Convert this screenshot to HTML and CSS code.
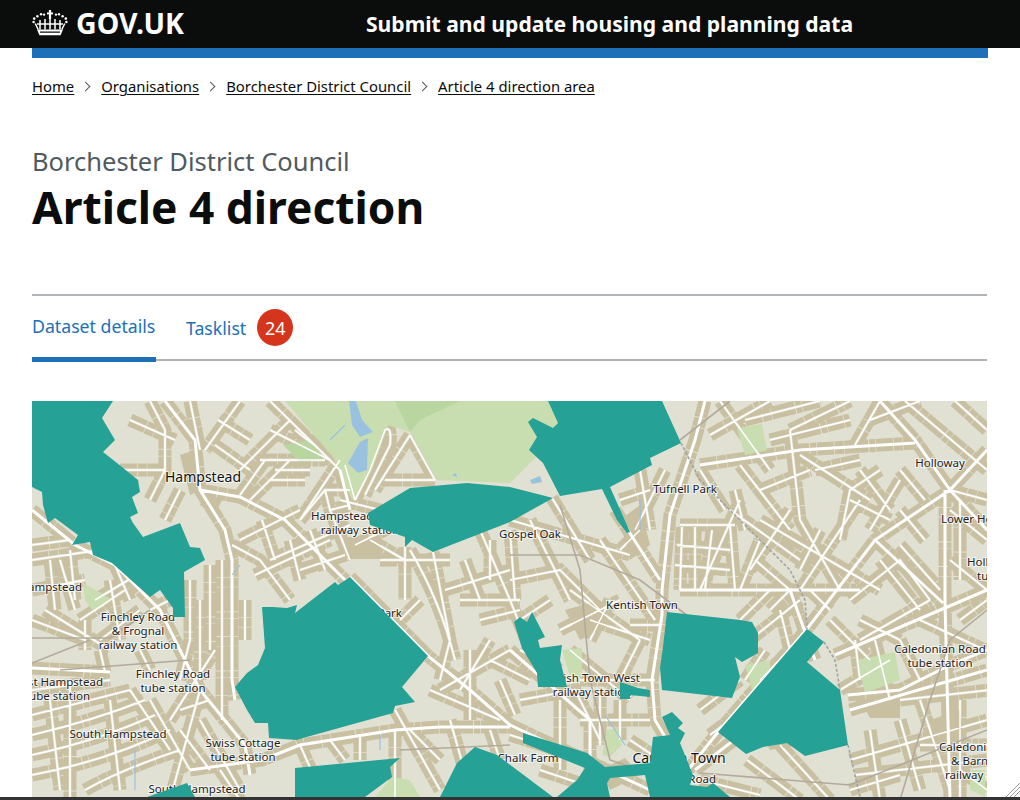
FILE: index.html
```html
<!DOCTYPE html>
<html lang="en">
	<head>
		<meta charset="utf-8">
		<title>Article 4 direction</title>
		<link rel="stylesheet" href="styles.css">
	</head>
	<body>
		<header class="top-bar">
			<a class="logo" href="#">
				<svg class="crown" viewBox="0 0 36 26" width="36" height="26" aria-hidden="true">
					<g fill="#fff">
						<rect x="16.9" y="0" width="2.2" height="9"/>
						<rect x="15" y="2.4" width="6" height="2"/>
						<circle cx="12" cy="4.6" r="1.2"/><circle cx="24" cy="4.6" r="1.2"/>
						<circle cx="9" cy="4.2" r="1.2"/><circle cx="27" cy="4.2" r="1.2"/>
						<circle cx="5.4" cy="6.2" r="1.2"/><circle cx="30.6" cy="6.2" r="1.2"/>
						<circle cx="2.2" cy="8.6" r="1.3"/><circle cx="33.8" cy="8.6" r="1.3"/>
						<circle cx="1.6" cy="12" r="1.2"/><circle cx="34.4" cy="12" r="1.2"/>
						<path d="M5 19.6h26l-2.4 5.6H7.4zM8 21.6v1.2h20v-1.2z" fill-rule="evenodd"/>
					</g>
					<g fill="none" stroke="#fff" stroke-width="1.5">
						<path d="M3.2 13.5l3 6M32.8 13.5l-3 6M8 10v9.6M28 10v9.6M13 9v10.6M23 9v10.6M18 9v10.6"/>
						<path d="M5 14h26"/>
					</g>
				</svg>
				<span class="logo-text">GOV.UK</span>
			</a>
			<a class="service-name" href="#">Submit and update housing and planning data</a>
		</header>

		<div class="wrapper">
			<div class="blue-bar"></div>

			<nav class="breadcrumbs">
				<a href="#">Home</a>
				<span class="sep"></span>
				<a href="#">Organisations</a>
				<span class="sep"></span>
				<a href="#">Borchester District Council</a>
				<span class="sep"></span>
				<a href="#">Article 4 direction area</a>
			</nav>

			<div class="page-head">
				<span class="caption">Borchester District Council</span>
				<h1>Article 4 direction</h1>
			</div>

			<nav class="tabs">
				<a class="tab active" href="#">Dataset details</a>
				<a class="tab" href="#">Tasklist <span class="count">24</span></a>
			</nav>

			<svg class="map" viewBox="32 401 955 396" width="955" height="396" role="img" aria-label="Map of Article 4 direction areas">
				<defs>
					<path id="minor" d="M150 401L165 430V470L150 500M130 420L175 440M190 401L200 450M120 470L165 470M240 401L205 450M240 470L290 420M260 460H325M270 430L330 460M270 401L340 470M340 460L300 520M345 465L355 500M265 460L240 495M275 470H310M270 480H305M250 500L290 460M300 520L325 490H350M325 490L330 510L350 505M355 500L370 470L385 430Q392 425 390 445L365 495M410 435L375 490M410 435L435 480M385 480H435M218 420L250 440M180 490L165 520M215 445L250 470M295 430L320 450
					M190 580V640M210 565V650M222 560V720M245 600V640M200 600V680M232 545L260 560L290 600M240 540L300 510M255 575L330 540M290 540L300 580M270 560L350 525M330 510L350 560M262 520L275 560M310 530L325 570M340 500L400 515M370 540L405 560M355 545L395 525M300 570L345 555
					M32 560L100 550M50 560L55 610M70 550L75 600M32 590L85 580M45 610L110 650M80 620L125 590M60 560L75 610M32 620L85 640M85 620V650M140 610L100 640M110 580L120 640M32 545L70 540M95 600L145 570M115 565L130 600M150 610L180 595
					M32 715Q90 700 130 690M32 735Q95 720 145 700M32 755Q100 740 155 715M32 775Q110 760 170 730M85 790Q120 770 180 750M70 680V800M130 690L170 750M170 720L215 650M150 700L190 770M200 690L170 800M32 690L110 680M110 700L120 790M180 710L210 700M200 720L240 790M210 770L180 730M100 650L105 672M140 650L150 670M180 680L190 640M220 770L240 800M50 700L60 790
					M405 547V600M410 550Q440 600 455 660M433 552L450 640L440 680M380 560H450M480 530L510 600L530 650M420 600L400 620M445 590L510 570M470 650V720M440 690L510 650M430 690L500 720M395 710L440 790M395 730V800M450 720L470 790M460 600H520M480 620L520 610M490 660L530 680M520 650L560 670M490 540V580M510 530L515 600M465 560L480 600M300 745L320 790M330 740L345 760M360 735V760M460 690L490 640M500 680L515 715M410 730L440 760M490 730L500 760
					M510 520L630 555M552 498L590 560M510 580L560 570L600 610M600 540L655 620M570 590L640 640M610 600L590 640M590 620L650 640M570 650L630 700M560 630L620 600M630 625H660M580 680H655M520 700L575 690L600 740M560 700V770M600 690L600 745M620 700V740M510 735L590 760M580 720H650M530 520L570 600M550 600L520 620M620 550L640 530M640 640L620 680M540 770L600 790M630 740L660 760
					M680 525H735M677 545L730 550M675 565L730 570M682 527L680 590M695 527V590M712 530L705 590M730 525L735 590M740 500L700 590M735 490L745 530M620 500L650 490M640 470L650 530M665 470L635 530
					M700 470L725 510M710 435L770 401M720 401L770 470M740 465L790 530M790 430L850 401M790 430L800 520L840 590M800 455L870 500M855 445L880 401M760 520L880 590M730 510L800 560M755 560L790 590M800 590L860 500M880 470L850 490L840 540M905 401L987 470M955 401L987 430M950 490L987 500M987 540L950 510M960 500V580M850 500L890 520M745 420L820 401M770 440L850 420M815 470L860 460M760 490L810 470M860 470L890 510M900 470L925 500M870 420L920 401M900 480L870 530M740 590L760 540M790 510L750 570M820 530L800 570M900 510L925 540
					M780 610L790 650L800 645M740 620L770 590M850 600L900 560L930 600M860 640L930 600M880 560L920 610M900 545L940 590M830 620L870 660M855 640L860 680M840 690L890 660M875 640L890 700M900 640L920 680M920 620L985 650M900 700L990 690M950 560L987 590M960 620L987 600M770 610L790 590M750 640L800 600M780 660L810 680M810 590L830 610M860 620L900 640
					M850 760L987 720M900 720L920 790M960 700V800M855 775L987 760M920 745H987M850 790L900 775M960 770L987 790M747 760L800 800M780 745L830 800M710 735L730 720M700 710L740 680M745 680L765 650M760 680L800 640M870 730L880 800M920 700L950 790M700 780L760 795"/>
					<path id="major" d="M32 510L75 545L115 565L160 610L180 650L200 690L245 745L250 775M165 401L195 440L200 490L225 530L232 560V680L235 700M200 490L240 497L285 520L350 585M350 577L428 656L470 690L510 725M190 770L262 760L300 745L395 730L440 727H510M32 668L110 672M700 465L800 450L915 443M880 401L915 440L950 490L987 530M987 450L950 490L875 540L807 629L718 732L688 770M875 540L943 603M945 490V603L950 800M705 401L695 440L670 515L662 590V615L652 680L655 720L670 745M615 510L660 580M680 590H860M848 695L900 690L950 665L987 650M835 655L987 590M850 710L987 670M510 650L590 720L590 800M510 725L650 790M790 590L815 660M695 770L760 720M340 470L350 510"/>
				</defs>

				<rect x="32" y="401" width="955" height="396" class="land"/>
				<use href="#minor" class="houses"/>
				<use href="#major" class="houses"/>
				<use href="#minor" class="yard"/>
				<path class="block" d="M343 537H381V559H350ZM205 492L222 500L215 515L200 505ZM860 700H900V718H870ZM180 455L195 450L200 490L190 495ZM600 770L625 758L640 775L610 790ZM620 520L640 505L650 545L630 560ZM760 730L790 725L800 745L770 750ZM930 720L960 710L965 745L935 750ZM565 610L600 600L610 625L580 640Z"/>

				<path class="park" d="M285 401L333 457L352 500L372 470L388 425L410 432L437 480L510 483L553 440L558 423L548 401Z"/>
				<path class="park-dark" d="M283 445L310 440L325 460L300 462ZM395 401H460L420 420L410 432Z"/>
				<path class="park" d="M83 583L113 600L92 610L85 600ZM737 428L762 424L767 450L745 455ZM857 660L895 652L900 680L865 693ZM745 665L770 660L770 680L752 690ZM562 650L582 648L582 677L570 677ZM607 730L618 728L622 745L610 757L602 755ZM970 790V770L985 770V797ZM375 797L392 777L410 780L420 797Z"/>

				<use href="#minor" class="street"/>
				<use href="#major" class="road"/>

				<path class="rail" d="M510 555H580L640 580L700 625M32 638H110L150 610M560 505L580 570L590 680L610 760L640 770M680 440L730 401M987 610L950 640L930 700L900 800M700 773L850 785L987 730M32 663L90 640M60 670L190 660M400 750L510 745"/>
				<path class="boundary" d="M681 443L700 480L730 510L760 540L790 570L805 600L807 629M824 642L835 660L840 690M848 745L860 797"/>
				<path class="pond" d="M349 401H356L362 420L373 432L360 437L352 425ZM348 463L360 442L368 438L367 470L358 473ZM452 475L456 473L457 477ZM530 480L540 476L542 482L532 484Z"/>
				<path class="brook" d="M232 575L240 565M345 425L330 440M433 530L438 550M640 500L640 530M380 735V750M135 750V790M605 715L625 745"/>

				<g class="labels">
					<text class="big" x="203" y="482">Hampstead</text>
					<text x="360" y="520">Hampstead Heath</text>
					<text x="360" y="534">railway station</text>
					<text x="530" y="538">Gospel Oak</text>
					<text x="685" y="493">Tufnell Park</text>
					<text x="940" y="467">Holloway</text>
					<text x="941" y="523" class="start">Lower Holloway</text>
					<text x="967" y="566" class="start">Holloway Road</text>
					<text x="977" y="580" class="start">tube station</text>
					<text x="642" y="609">Kentish Town</text>
					<text x="402" y="617" class="end">Belsize Park</text>
					<text x="82" y="591" class="end">West Hampstead</text>
					<text x="138" y="621">Finchley Road</text>
					<text x="138" y="635">&amp; Frognal</text>
					<text x="138" y="649">railway station</text>
					<text x="173" y="678">Finchley Road</text>
					<text x="173" y="692">tube station</text>
					<text x="103" y="686" class="end">West Hampstead</text>
					<text x="90" y="700" class="end">tube station</text>
					<text x="118" y="738">South Hampstead</text>
					<text x="243" y="747">Swiss Cottage</text>
					<text x="243" y="761">tube station</text>
					<text x="197" y="793">South Hampstead</text>
					<text x="640" y="682" class="end">Kentish Town West</text>
					<text x="592" y="696">railway station</text>
					<text x="528" y="762">Chalk Farm</text>
					<text class="big" x="679" y="763">Camden Town</text>
					<text x="716" y="783" class="end">Road</text>
					<text x="940" y="653">Caledonian Road</text>
					<text x="940" y="667">tube station</text>
					<text x="939" y="751" class="start">Caledonian Road</text>
					<text x="951" y="765" class="start">&amp; Barnsbury</text>
					<text x="945" y="779" class="start">railway station</text>
				</g>

				<g class="areas">
					<path d="M32 401H113L102 418L115 440L103 452L117 463L138 480L140 492L132 497L138 513L130 517L133 523L143 537L180 523L190 547L200 548L205 560L184 572L185 617L173 617L173 608L160 590L150 597L112 563L93 555L90 542L72 545L78 535L55 518L48 523L43 505L42 492L32 487Z"/>
					<path d="M350 577L428 656L402 687L415 702L395 706L393 713L303 738L297 740L269 738L268 723L255 723L247 710L235 687L247 673L258 665L265 648L262 607L273 607L287 608L297 605L295 613L335 582L338 585Z"/>
					<path d="M368 513L410 488L467 483L510 487L553 498L510 522L433 552L412 540L405 547L405 537L370 525Z"/>
					<path d="M548 401H662L681 443L650 458L652 465L610 487L630 532L627 533L617 520L602 489L560 496L543 463L529 450L537 437L528 422L533 418L553 428L558 423Z"/>
					<path d="M667 612L740 620L752 622L758 633L758 653L742 662L735 657L740 677L732 698L662 690L660 668L663 647Z"/>
					<path d="M807 629L824 642L807 662L840 690L848 745L805 756L787 743L763 747L746 754L718 732Z"/>
					<path d="M514 622L520 617L527 622L532 612L545 637L538 640L540 648L562 645L560 660L567 687L538 687L537 673L522 648Z"/>
					<path d="M620 682L638 688L650 690V697L630 695V699H620Z"/>
					<path d="M523 733L587 753L605 767L650 763L653 737L670 735L662 717L672 712L683 723L678 728L685 733L680 743L693 775L690 785L707 787L713 783L730 797H650L645 775L610 778L607 783L610 797H557L577 780L585 768L523 743Z"/>
					<path d="M440 797L457 763L475 747L497 755L553 797Z"/>
					<path d="M295 768L400 758L390 767L392 777L365 797H295Z"/>
					<path d="M147 797L187 783L195 797Z"/>
				</g>
			</svg>
		</div>

		<div class="window-edge"></div>
		<svg class="resize-grip" viewBox="0 0 14 14" width="14" height="14" aria-hidden="true">
			<path d="M0 14L14 0M4 14L14 4M8 14L14 8" stroke="#9a9a9a" fill="none"/>
		</svg>
	</body>
</html>
```

FILE: styles.css
```css
*{margin: 0;padding: 0;box-sizing: border-box;}
html,body{height: 800px;overflow: hidden;}
body{
	font-family: "Noto Sans", "Liberation Sans", sans-serif;
	color: #0b0c0c;
	background: #fff;
}
a{color: inherit;text-underline-offset: 2px;}

.top-bar{
	display: flex;
	align-items: center;
	height: 48px;
	padding: 0 0 2px 32px;
	background: #0b0c0c;
	color: #fff;
}
.logo{
	display: flex;
	align-items: center;
	gap: 8px;
	width: 334px;
	text-decoration: none;
}
.logo-text{
	font-size: 28.5px;
	font-weight: bold;
}
.service-name{
	font-size: 21.1px;
	font-weight: bold;
	text-decoration: none;
	white-space: nowrap;
}

.wrapper{
	width: 955px;
	margin-left: 32px;
}
.blue-bar{
	width: 956px;
	height: 10px;
	background: #1d70b8;
}

.breadcrumbs{
	display: flex;
	align-items: center;
	margin-top: 18px;
	height: 20px;
	font-size: 14.85px;
}
.breadcrumbs a{
	white-space: nowrap;
}
.sep{
	width: 7px;
	height: 7px;
	margin: 0 12px 0 8px;
	border-top: 1px solid #505a5f;
	border-right: 1px solid #505a5f;
	transform: rotate(45deg);
}

.page-head{
	margin-top: 49px;
}
.caption{
	display: block;
	font-size: 25.5px;
	line-height: 32px;
	color: #505a5f;
}
h1{
	margin-top: 1px;
	font-size: 44.3px;
	line-height: 58px;
	font-weight: bold;
}

.tabs{
	display: flex;
	align-items: center;
	height: 67px;
	margin-top: 58px;
	border-top: 2px solid #b1b4b6;
	border-bottom: 2px solid #b1b4b6;
	font-size: 17.7px;
	color: #1d70b8;
}
.tab{
	display: flex;
	align-items: center;
	gap: 11px;
	height: 100%;
	color: #1d70b8;
	text-decoration: none;
}
.tab.active{
	width: 124px;
	margin-right: 30px;
	margin-bottom: -2px;
	height: 67px;
	border-bottom: 5px solid #1d70b8;
}
.count{
	display: flex;
	align-items: center;
	justify-content: center;
	width: 36px;
	height: 37px;
	border-radius: 50%;
	background: #d4351c;
	color: #fff;
	font-size: 18px;
}

.map{
	display: block;
	margin-top: 40px;
	font-family: "Noto Sans", sans-serif;
}
.land{fill: #e1e1d3;}
.houses{fill: none;stroke: #c9bfa1;stroke-width: 13;stroke-dasharray: 17 .8 9 .6 24 1 6 .7;}
.yard{fill: none;stroke: #e1e1d3;stroke-width: 2.8;}
.block{fill: #c9bfa1;}
.street{fill: none;stroke: #fff;stroke-width: 1.5;}
.road{fill: none;stroke: #fff;stroke-width: 3;}
.park{fill: #c9deb0;}
.park-dark{fill: #b9d6a0;}
.rail{fill: none;stroke: #b3aa9c;stroke-width: 1.6;}
.boundary{fill: none;stroke: #9ea3a3;stroke-width: 1.6;stroke-dasharray: 3 2;}
.pond{fill: #98c2e0;}
.brook{fill: none;stroke: #98c2e0;stroke-width: 1.2;}
.labels text{
	font-size: 11.5px;
	fill: #222;
	text-anchor: middle;
	stroke: #fff;
	stroke-width: 2px;
	stroke-opacity: 0.7;
	paint-order: stroke;
}
.labels text.big{font-size: 14px;fill: #111;}
.labels text.start{text-anchor: start;}
.labels text.end{text-anchor: end;}
.areas path{fill: #25a196;}

.window-edge{
	position: fixed;
	left: 0;
	right: 0;
	bottom: 0;
	height: 3px;
	background: #333;
}
.resize-grip{
	position: fixed;
	right: 0;
	bottom: 3px;
}
```
